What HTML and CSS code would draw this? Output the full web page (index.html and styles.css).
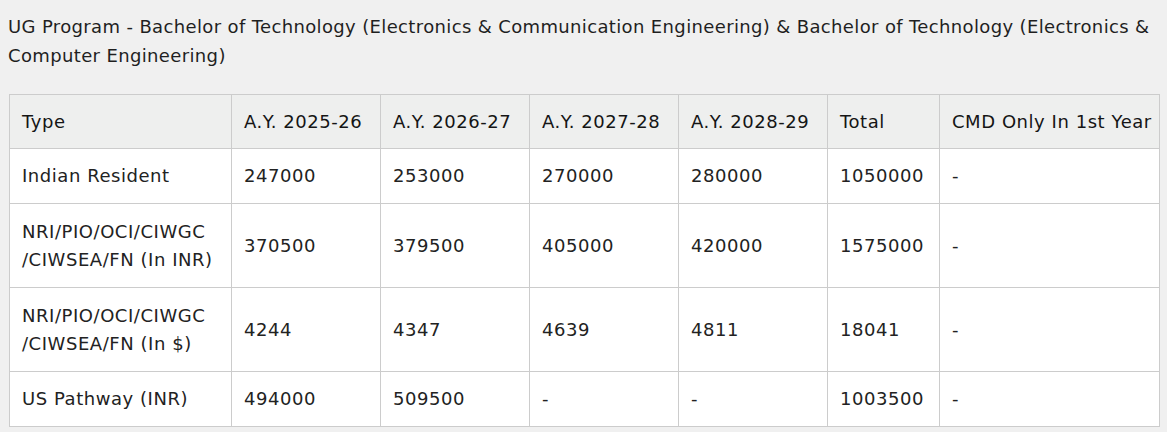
FILE: index.html
```html
<!DOCTYPE html>
<html>
<head>
<meta charset="utf-8">
<link rel="stylesheet" href="styles.css">
</head>
<body>
<h4 class="title">UG Program - Bachelor of Technology (Electronics &amp; Communication Engineering) &amp; Bachelor of Technology (Electronics &amp; Computer Engineering)</h4>
<table class="fees">
<colgroup>
<col class="c-type"><col class="c-yr"><col class="c-yr"><col class="c-yr"><col class="c-yr"><col class="c-total"><col class="c-cmd">
</colgroup>
<thead>
<tr><th>Type</th><th>A.Y. 2025-26</th><th>A.Y. 2026-27</th><th>A.Y. 2027-28</th><th>A.Y. 2028-29</th><th>Total</th><th>CMD Only In 1st Year</th></tr>
</thead>
<tbody>
<tr class="short"><td>Indian Resident</td><td>247000</td><td>253000</td><td>270000</td><td>280000</td><td>1050000</td><td>-</td></tr>
<tr class="tall"><td>NRI/PIO/OCI/CIWGC<br>/CIWSEA/FN (In INR)</td><td>370500</td><td>379500</td><td>405000</td><td>420000</td><td>1575000</td><td>-</td></tr>
<tr class="tall"><td>NRI/PIO/OCI/CIWGC<br>/CIWSEA/FN (In $)</td><td>4244</td><td>4347</td><td>4639</td><td>4811</td><td>18041</td><td>-</td></tr>
<tr class="short"><td>US Pathway (INR)</td><td>494000</td><td>509500</td><td>-</td><td>-</td><td>1003500</td><td>-</td></tr>
</tbody>
</table>
</body>
</html>
```
FILE: styles.css
```css
html, body {
  margin: 0;
  padding: 0;
  background: #f0f0f0;
}
body {
  padding: 8px 8px 0 8px;
  font-family: "DejaVu Sans", "Liberation Sans", sans-serif;
  color: #222;
}
.title {
  margin: 4px 0 0 0;
  font-size: 18px;
  font-weight: 400;
  line-height: 29px;
  letter-spacing: 0.36px;
  color: #1f1f1f;
}
.fees {
  margin-top: 24px;
  margin-left: 1px;
  width: 1151px;
  border-collapse: collapse;
  table-layout: fixed;
  background: #fff;
  font-size: 18px;
  letter-spacing: 0.55px;
}
.c-type { width: 222px; }
.c-yr { width: 149px; }
.c-total { width: 112px; }
.c-cmd { width: 220px; }
.fees th, .fees td {
  border: 1px solid #cccccc;
  padding: 0 0 0 12px;
  text-align: left;
  vertical-align: middle;
  line-height: 28px;
  color: #222;
}
.fees th {
  font-weight: 400;
  color: #151515;
  background: #eeefee;
  height: 53px;
}
.short td { height: 54px; }
.tall td { height: 83px; }
```
